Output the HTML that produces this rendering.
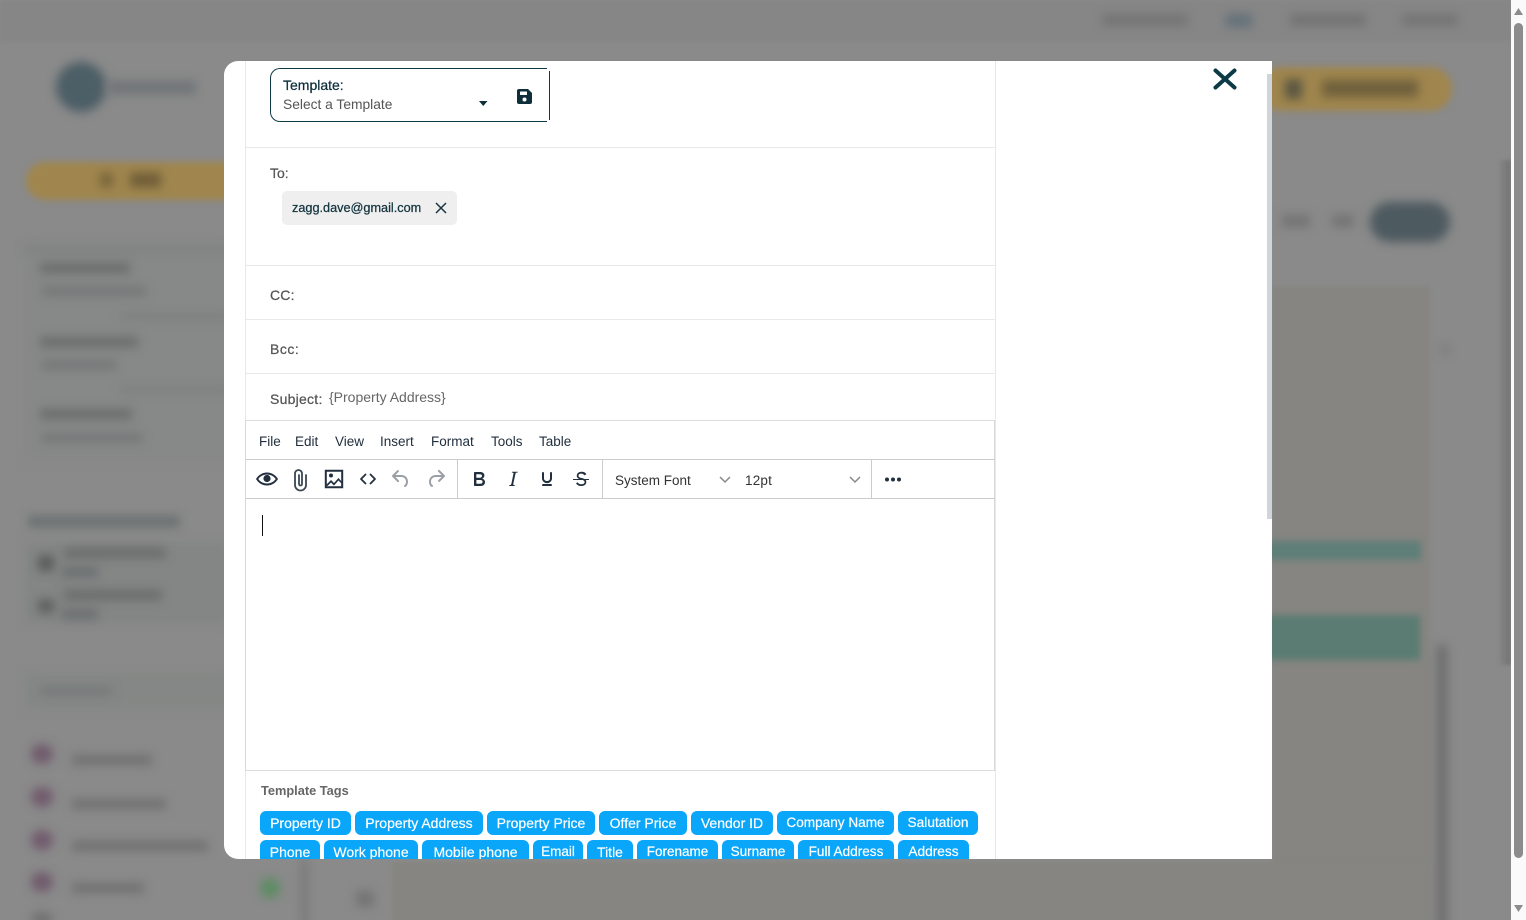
<!DOCTYPE html>
<html><head><meta charset="utf-8"><title>Email</title>
<style>
html,body{margin:0;padding:0;width:1526px;height:920px;overflow:hidden;background:#8a8a8a;font-family:"Liberation Sans",sans-serif}
.a{position:absolute}
#bg{position:absolute;left:0;top:0;width:1511px;height:920px;background:#8a8a8a;overflow:hidden}
#bg div{position:absolute}
.b3{filter:blur(5px)}
.b2{filter:blur(3.500px)}
#modal{position:absolute;left:224px;top:61px;width:1048px;height:798px;background:#fff;border-radius:14px 0 0 14px;overflow:hidden}
#m{position:absolute;left:-224px;top:-61px;width:1526px;height:920px}
.h{position:absolute;left:245px;width:750px;height:1px;background:#e8e8e8}
.hd{position:absolute;left:246px;width:749px;height:1px;background:#ccc}
.v{position:absolute;width:1px;background:#ccc;top:460px;height:38px}
.t{position:absolute;white-space:nowrap;color:#444;font-size:14px;line-height:16px}
.lb{-webkit-text-stroke:.25px currentColor}
.menu{position:absolute;top:434px;font-size:13.500px;line-height:16px;color:#222f3e;white-space:nowrap}
.tag{position:absolute;height:24px;line-height:24px;background:#09a6fa;color:#fff;border-radius:6px;font-size:14px;text-align:center;white-space:nowrap;-webkit-text-stroke:.2px #fff}
svg{position:absolute;overflow:visible}
.ic{fill:#222f3e}
</style></head><body>
<div id="bg">
  <div style="left:0;top:0;width:1511px;height:42px;background:#868686;filter:blur(2px)"></div>
  <div class="b3" style="left:1102px;top:15px;width:86px;height:10px;background:#727272"></div>
  <div class="b3" style="left:1226px;top:14px;width:26px;height:13px;background:#62707a"></div>
  <div class="b3" style="left:1290px;top:15px;width:76px;height:10px;background:#707070"></div>
  <div class="b3" style="left:1402px;top:15px;width:56px;height:10px;background:#727272"></div>
  <div class="b3" style="left:56px;top:62px;width:50px;height:50px;border-radius:50%;background:#4c5e66"></div>
  <div class="b3" style="left:108px;top:81px;width:88px;height:13px;background:#6f7476"></div>
  <div class="b2" style="left:26px;top:162px;width:230px;height:38px;border-radius:19px;background:#a0864e"></div>
  <div class="b3" style="left:100px;top:173px;width:13px;height:14px;background:#75633a"></div>
  <div class="b3" style="left:130px;top:173px;width:31px;height:14px;background:#6d5c38"></div>
  <div class="b2" style="left:1260px;top:67px;width:192px;height:44px;border-radius:22px;background:#a0864e"></div>
  <div class="b3" style="left:1285px;top:79px;width:17px;height:20px;background:#595642"></div>
  <div class="b3" style="left:1322px;top:80px;width:96px;height:17px;background:#6f603c"></div>
  <div class="b3" style="left:1370px;top:202px;width:80px;height:40px;border-radius:20px;background:#4d5a60"></div>
  <div class="b3" style="left:1282px;top:215px;width:28px;height:12px;background:#737373"></div>
  <div class="b3" style="left:1332px;top:215px;width:22px;height:12px;background:#737373"></div>

  <div class="b3" style="left:24px;top:247px;width:210px;height:215px;background:#878888"></div>
  <div class="b3" style="left:24px;top:247px;width:210px;height:3px;background:#767979"></div>
  <div class="b3" style="left:40px;top:263px;width:90px;height:10px;background:#6a6c6c"></div>
  <div class="b3" style="left:42px;top:287px;width:104px;height:8px;background:#727575"></div>
  <div class="b3" style="left:120px;top:315px;width:110px;height:3px;background:#747676"></div>
  <div class="b3" style="left:40px;top:337px;width:98px;height:10px;background:#6a6c6c"></div>
  <div class="b3" style="left:42px;top:361px;width:74px;height:8px;background:#727575"></div>
  <div class="b3" style="left:120px;top:388px;width:110px;height:3px;background:#747676"></div>
  <div class="b3" style="left:40px;top:409px;width:92px;height:10px;background:#6a6c6c"></div>
  <div class="b3" style="left:42px;top:434px;width:100px;height:8px;background:#727575"></div>

  <div class="b3" style="left:28px;top:516px;width:152px;height:11px;background:#6a6f6f"></div>
  <div class="b3" style="left:24px;top:542px;width:206px;height:82px;background:#848685"></div>
  <div class="b3" style="left:38px;top:555px;width:16px;height:16px;background:#5a5c5c"></div>
  <div class="b3" style="left:64px;top:548px;width:102px;height:10px;background:#6a6c6c"></div>
  <div class="b3" style="left:62px;top:567px;width:36px;height:10px;background:#6a6e70"></div>
  <div class="b3" style="left:38px;top:599px;width:16px;height:14px;background:#5e6060"></div>
  <div class="b3" style="left:64px;top:590px;width:98px;height:10px;background:#6a6c6c"></div>
  <div class="b3" style="left:62px;top:609px;width:36px;height:10px;background:#6a6e70"></div>
  <div class="b3" style="left:24px;top:672px;width:206px;height:38px;background:#858786"></div>
  <div class="b3" style="left:40px;top:687px;width:72px;height:8px;background:#747878"></div>

  <div class="b3" style="left:31px;top:744px;width:22px;height:20px;border-radius:50%;background:#705a6c"></div>
  <div class="b3" style="left:72px;top:755px;width:80px;height:10px;background:#707070"></div>
  <div class="b3" style="left:31px;top:787px;width:22px;height:20px;border-radius:50%;background:#705a6c"></div>
  <div class="b3" style="left:72px;top:799px;width:94px;height:10px;background:#707070"></div>
  <div class="b3" style="left:31px;top:830px;width:22px;height:20px;border-radius:50%;background:#705a6c"></div>
  <div class="b3" style="left:72px;top:841px;width:136px;height:10px;background:#707070"></div>
  <div class="b3" style="left:31px;top:872px;width:22px;height:20px;border-radius:50%;background:#705a6c"></div>
  <div class="b3" style="left:72px;top:883px;width:72px;height:10px;background:#707070"></div>
  <div class="b3" style="left:31px;top:912px;width:22px;height:14px;border-radius:50%;background:#707070"></div>
  <div class="b3" style="left:260px;top:878px;width:20px;height:20px;border-radius:50%;background:#5c8c62"></div>
  <div class="b3" style="left:302px;top:860px;width:5px;height:70px;background:#727272"></div>
  <div class="b3" style="left:356px;top:891px;width:18px;height:16px;background:#747474"></div>

  <div style="left:1272px;top:286px;width:158px;height:650px;background:#868581;filter:blur(2px)"></div>
  <div style="left:392px;top:862px;width:1038px;height:70px;background:#868581;filter:blur(2px)"></div>
  <div class="b2" style="left:1262px;top:541px;width:159px;height:19px;background:#5e7e78"></div>
  <div class="b2" style="left:1262px;top:615px;width:158px;height:45px;background:#5a7c72"></div>
  <div class="b3" style="left:1437px;top:645px;width:10px;height:285px;background:#6c6c6c"></div>
  <div style="left:1497px;top:160px;width:14px;height:505px;background:linear-gradient(90deg,#8a8a8a,#727272);filter:blur(1.500px)"></div>
  <div class="b3" style="left:1442px;top:346px;width:6px;height:8px;background:#747474"></div>
</div>

<div class="a" style="left:1511px;top:0;width:15px;height:920px;background:#fafafa"></div>
<div class="a" style="left:1514px;top:23px;width:9px;height:835px;border-radius:5px;background:#8c8c8c"></div>
<svg style="left:1511px;top:0" width="15" height="920"><path d="M7.500 8L12 15H3z" fill="#8c8c8c"/><path d="M3 905h9L7.500 912z" fill="#8c8c8c"/></svg>

<div id="modal"><div id="m">
  <div class="a" style="left:245px;top:61px;width:1px;height:798px;background:#e8e8e8"></div>
  <div class="a" style="left:995px;top:61px;width:1px;height:798px;background:#e8e8e8"></div>
  <div class="a" style="left:1267px;top:74px;width:5px;height:445px;background:#cfd5d8"></div>

  <div class="a" style="left:270px;top:68px;width:276px;height:52px;border:1px solid #0e3a45;border-right:0;border-radius:10px 0 0 10px"></div>
  <div class="a" style="left:549px;top:71px;width:1px;height:49px;background:#0e3a45"></div>
  <div class="t lb" style="left:283px;top:77px;color:#0e2f3a;font-size:14px">Template:</div>
  <div class="t" style="left:283px;top:97px;color:#555;font-size:13.800px">Select a Template</div>
  <svg style="left:479px;top:101px" width="9" height="6"><path d="M0 0h8.500L4.250 5z" fill="#0e2f3a"/></svg>
  <svg style="left:517px;top:89px" width="15" height="15" viewBox="0 0 15 15"><path d="M2 0h9l4 4v9a2 2 0 0 1-2 2H2a2 2 0 0 1-2-2V2a2 2 0 0 1 2-2z" fill="#0e2f3a"/><rect x="3" y="2.500" width="7" height="3.500" rx=".5" fill="#fff"/><circle cx="7.500" cy="10.500" r="2" fill="#fff"/></svg>

  <div class="h" style="top:147px"></div>
  <div class="t lb" style="left:270px;top:165px;color:#555">To:</div>
  <div class="a" style="left:282px;top:191px;width:175px;height:34px;background:#efefef;border-radius:5px"></div>
  <div class="t lb" style="left:292px;top:200px;color:#14343f;font-size:12.700px">zagg.dave@gmail.com</div>
  <svg style="left:435px;top:202px" width="12" height="12"><path d="M1 1l10 10M11 1L1 11" stroke="#14343f" stroke-width="1.500" fill="none"/></svg>

  <div class="h" style="top:265px"></div>
  <div class="t lb" style="left:270px;top:287px;color:#555;letter-spacing:.2px">CC:</div>
  <div class="h" style="top:319px"></div>
  <div class="t lb" style="left:270px;top:341px;color:#555;letter-spacing:.5px">Bcc:</div>
  <div class="h" style="top:373px"></div>
  <div class="t lb" style="left:270px;top:391px;color:#555;letter-spacing:.25px">Subject:</div>
  <div class="t" style="left:329px;top:389px;color:#666">{Property Address}</div>

  <div class="a" style="left:246px;top:420px;width:749px;height:1px;background:#ddd"></div>
  <div class="a" style="left:245px;top:420px;width:1px;height:351px;background:#d8d8d8"></div>
  <div class="a" style="left:994px;top:420px;width:1px;height:351px;background:#d8d8d8"></div>
  <div class="menu" style="left:259px">File</div>
  <div class="menu" style="left:295px">Edit</div>
  <div class="menu" style="left:335px">View</div>
  <div class="menu" style="left:380px">Insert</div>
  <div class="menu" style="left:431px">Format</div>
  <div class="menu" style="left:491px">Tools</div>
  <div class="menu" style="left:539px">Table</div>

  <div class="hd" style="top:459px"></div>
  <div class="hd" style="top:498px"></div>
  <div class="v" style="left:457px"></div>
  <div class="v" style="left:602px"></div>
  <div class="v" style="left:871px"></div>

  <svg style="left:255px;top:467px" width="24" height="24" viewBox="0 0 24 24"><path d="M12 5.500C7 5.500 3 8.500 1 12c2 3.500 6 6.500 11 6.500S21 15.500 23 12c-2-3.500-6-6.500-11-6.500zm0 11C8.300 16.500 5.200 14.700 3.300 12 5.200 9.300 8.300 7.500 12 7.500s6.800 1.800 8.700 4.500c-1.900 2.700-5 4.500-8.700 4.500z" class="ic"/><circle cx="12" cy="11.500" r="3.600" class="ic"/></svg>
  <svg style="left:293px;top:468px" width="15" height="24" viewBox="0 0 15 24"><path d="M13 7v10a5.500 5.500 0 0 1-11 0V5.500a3.500 3.500 0 0 1 7 0V16a1.500 1.500 0 0 1-3 0V7" fill="none" stroke="#3a4653" stroke-width="1.800" stroke-linecap="round"/></svg>
  <svg style="left:322px;top:467px" width="24" height="24" viewBox="0 0 24 24"><path d="M3.800 3.800h16.400v16.400H3.800z" fill="none" stroke="#222f3e" stroke-width="2"/><circle cx="9" cy="8.500" r="2" class="ic"/><path d="M4 18l5-5 3 3 4.500-5 3.500 4v2l-3.500-3.500L12 18.500l-3-3-3.500 3.500z" class="ic"/></svg>
  <svg style="left:356px;top:467px" width="24" height="24" viewBox="0 0 24 24"><path d="M9.500 7.500L5 12l4.500 4.500M14.500 7.500L19 12l-4.500 4.500" fill="none" stroke="#222f3e" stroke-width="1.800" stroke-linecap="round" stroke-linejoin="round"/></svg>
  <svg style="left:389px;top:467px" width="24" height="24" viewBox="0 0 24 24"><path fill="#9a9fa6" d="M6.400 8H12c3.700 0 6.200 2 6.800 5.100.6 2.700-.4 5.600-2.300 6.800a1 1 0 0 1-1-1.800c1.100-.6 1.800-2.700 1.400-4.600-.5-2.100-2.100-3.500-4.900-3.500H6.400l3.300 3.300a1 1 0 1 1-1.400 1.400l-5-5a1 1 0 0 1 0-1.400l5-5a1 1 0 0 1 1.400 1.400L6.400 8z"/></svg>
  <svg style="left:424px;top:467px" width="24" height="24" viewBox="0 0 24 24"><path fill="#9a9fa6" d="M17.600 10H12c-2.800 0-4.400 1.400-4.900 3.500-.4 2 .3 4 1.400 4.600a1 1 0 1 1-1 1.800c-1.900-1.200-2.900-4.100-2.300-6.800C6 10 8.400 8 12 8h5.600l-3.300-3.300a1 1 0 1 1 1.400-1.400l5 5a1 1 0 0 1 0 1.400l-5 5a1 1 0 0 1-1.400-1.400l3.300-3.300z"/></svg>
  <svg style="left:467px;top:467px" width="24" height="24" viewBox="0 0 24 24"><path class="ic" d="M7.800 19c-.3 0-.5 0-.6-.2l-.2-.5V5.700c0-.2 0-.4.200-.5l.6-.2h5c1.500 0 2.700.3 3.500 1 .7.600 1.100 1.400 1.100 2.500a3 3 0 0 1-.6 1.900c-.4.600-1 1-1.600 1.200.4.100.9.300 1.300.6s.8.700 1 1.200c.4.400.5 1 .5 1.600 0 1.300-.4 2.300-1.300 3-.8.700-2.100 1-3.800 1H7.800zm5-8.300c.6 0 1.200-.1 1.600-.5.400-.3.600-.7.600-1.300 0-1.100-.8-1.700-2.300-1.700H9.300v3.500h3.500zm.5 6c.7 0 1.300-.1 1.700-.4.400-.4.600-.9.600-1.500s-.2-1-.7-1.400c-.4-.3-1-.4-2-.4H9.400v3.800h3.900z"/></svg>
  <svg style="left:501px;top:467px" width="24" height="24" viewBox="0 0 24 24"><path class="ic" d="M16.700 4.700l-.1.900h-.3c-.6 0-1 0-1.400.3-.3.300-.4.600-.5 1.100l-2.100 9.800v.6c0 .5.400.8 1.400.8h.2l-.2.800H8l.2-.8h.2c1.100 0 1.800-.5 2-1.500l2-9.800.1-.5c0-.6-.4-.8-1.400-.8h-.3l.2-.9h5.700z"/></svg>
  <svg style="left:535px;top:467px" width="24" height="24" viewBox="0 0 24 24"><path class="ic" d="M16 5c.6 0 1 .4 1 1v5.500a4 4 0 0 1-.4 1.800l-1 1.400a5.300 5.300 0 0 1-5.500 1 5 5 0 0 1-1.600-1c-.5-.4-.8-.9-1.100-1.400a4 4 0 0 1-.4-1.800V6c0-.6.400-1 1-1s1 .4 1 1v5.500c0 .3 0 .6.200 1l.6.700a3.300 3.300 0 0 0 2.200.8 3.400 3.400 0 0 0 2.200-.8c.3-.2.400-.5.600-.8l.2-.9V6c0-.6.400-1 1-1zM8 17h8c.6 0 1 .4 1 1s-.4 1-1 1H8a1 1 0 0 1 0-2z"/></svg>
  <svg style="left:569px;top:467px" width="24" height="24" viewBox="0 0 24 24"><path class="ic" d="M15.600 8.500c-.5-.7-1-1.100-1.300-1.300-.6-.4-1.300-.6-2-.6-2.700 0-2.800 1.700-2.800 2.100 0 1.600 1.800 2 3.200 2.300 4.400.9 4.600 2.800 4.600 3.900 0 1.400-.7 4.100-5 4.100A6.200 6.200 0 0 1 7 16.400l1.500-1.100c.4.600 1.600 2 3.700 2 1.600 0 2.500-.4 3-1 .3-.4.400-.9.400-1.300 0-1.600-1.800-2-3.200-2.300-4.400-.9-4.600-2.800-4.600-3.900 0-1.400.7-4.100 5-4.100 1.200 0 2 .3 2.800.7.700.4 1.300 1 1.800 1.800l-1.800 1zM4 12h16v1H4z"/></svg>

  <div class="t" style="left:615px;top:473px;color:#333;font-size:13.500px">System Font</div>
  <svg style="left:719px;top:476px" width="12" height="8"><path d="M1 1l5 5 5-5" fill="none" stroke="#888" stroke-width="1.500"/></svg>
  <div class="t" style="left:745px;top:473px;color:#333;font-size:13.500px;letter-spacing:.2px">12pt</div>
  <svg style="left:849px;top:476px" width="12" height="8"><path d="M1 1l5 5 5-5" fill="none" stroke="#888" stroke-width="1.500"/></svg>
  <svg style="left:885px;top:477px" width="17" height="5"><circle cx="2" cy="2.500" r="2" fill="#222f3e"/><circle cx="8" cy="2.500" r="2" fill="#222f3e"/><circle cx="14" cy="2.500" r="2" fill="#222f3e"/></svg>

  <div class="a" style="left:262px;top:515px;width:1px;height:21px;background:#111"></div>
  <div class="a" style="left:246px;top:770px;width:749px;height:1px;background:#ddd"></div>

  <div class="t" style="left:261px;top:782.500px;font-size:12.800px;font-weight:bold;color:#666">Template Tags</div>

  <div class="tag" style="left:260px;top:811px;width:91px">Property ID</div>
  <div class="tag" style="left:355px;top:811px;width:128px">Property Address</div>
  <div class="tag" style="left:487px;top:811px;width:108px">Property Price</div>
  <div class="tag" style="left:599px;top:811px;width:88px">Offer Price</div>
  <div class="tag" style="left:691px;top:811px;width:82px">Vendor ID</div>
  <div class="tag" style="left:777px;top:811px;width:117px;font-size:13.600px">Company Name</div>
  <div class="tag" style="left:898px;top:811px;width:80px;font-size:13.700px">Salutation</div>
  <div class="tag" style="left:260px;top:840px;width:60px">Phone</div>
  <div class="tag" style="left:324px;top:840px;width:94px">Work phone</div>
  <div class="tag" style="left:422px;top:840px;width:107px">Mobile phone</div>
  <div class="tag" style="left:533px;top:840px;width:50px;font-size:13.500px">Email</div>
  <div class="tag" style="left:587px;top:840px;width:46px">Title</div>
  <div class="tag" style="left:637px;top:840px;width:81px;font-size:13.500px">Forename</div>
  <div class="tag" style="left:722px;top:840px;width:72px;font-size:13.500px">Surname</div>
  <div class="tag" style="left:798px;top:840px;width:96px;font-size:13.600px">Full Address</div>
  <div class="tag" style="left:898px;top:840px;width:71px;font-size:13.700px">Address</div>

  <svg style="left:1212px;top:67px" width="26" height="24"><path d="M3.500 3.500l19 17M22.500 3.500l-19 17" stroke="#0d3a47" stroke-width="4" stroke-linecap="round" fill="none"/></svg>
</div></div>
</body></html>
